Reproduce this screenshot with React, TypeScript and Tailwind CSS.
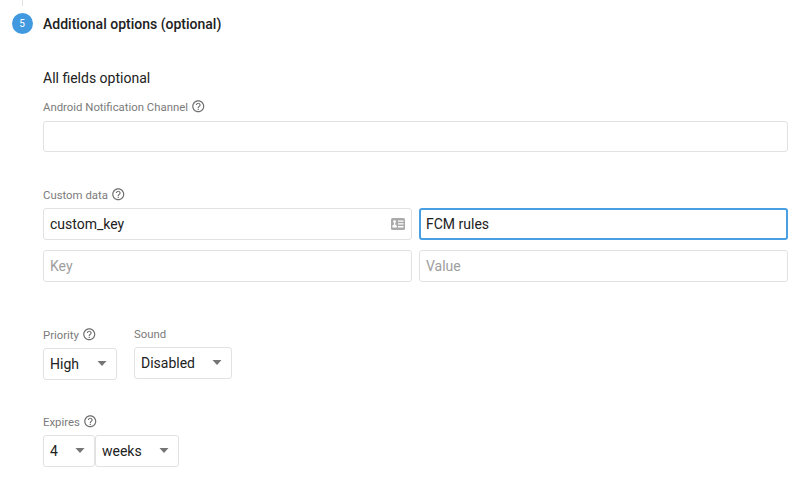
import React from "react";

function HelpIcon() {
  return (
    <svg viewBox="0 0 24 24" className="h-[14.5px] w-[14.5px] shrink-0 fill-[#6f6f6f]">
      <path d="M11 18h2v-2h-2v2zm1-16C6.48 2 2 6.48 2 12s4.48 10 10 10 10-4.48 10-10S17.52 2 12 2zm0 18c-4.41 0-8-3.59-8-8s3.59-8 8-8 8 3.59 8 8-3.59 8-8 8zm0-14c-2.21 0-4 1.79-4 4h2c0-1.1.9-2 2-2s2 .9 2 2c0 2-3 1.75-3 5h2c0-2.25 3-2.5 3-5 0-2.21-1.79-4-4-4z" />
    </svg>
  );
}

function ContactCardIcon() {
  return (
    <svg viewBox="0 0 14 12" className="h-[12px] w-[14px] shrink-0">
      <rect width="14" height="12" rx="1.5" fill="#aaaaaa" />
      <circle cx="3.6" cy="3.6" r="1.4" fill="#fff" />
      <path d="M2.9 4.5h1.4v2.2l1.5.8v2H1.4v-2l1.5-.8z" fill="#fff" />
      <path d="M7 2.5h5.5v1.3H7zM7 5.3h5.5v1.3H7zM7 8.1h5.5v1.3H7z" fill="#fff" />
    </svg>
  );
}

function Label({ text, help = true }: { text: string; help?: boolean }) {
  return (
    <div className="flex h-4 items-center gap-[3.5px] text-[11.375px] leading-4 text-[#7b7b7b]">
      <span className={help ? "pt-px" : "-mt-px"}>{text}</span>
      {help && <HelpIcon />}
    </div>
  );
}

function Select({ value, className }: { value: string; className: string }) {
  return (
    <button
      type="button"
      className={`flex items-center justify-between rounded-[3px] border border-[#e2e2e2] pl-[6px] pr-[9px] text-left ${className}`}
    >
      <span>{value}</span>
      <svg viewBox="0 0 10 5" className="mb-px h-[5px] w-[10px] fill-[#757575]">
        <path d="M0.5 0h9L5 5z" />
      </svg>
    </button>
  );
}

const inputClass =
  "w-full min-w-0 rounded-[3px] border border-[#e2e2e2] px-[6px] placeholder-[#9e9e9e] outline-none";

export default function App() {
  return (
    <div className="h-[486px] w-[800px] overflow-hidden bg-white pl-[11px] pr-3 font-['Roboto',sans-serif] text-[14px] leading-5 text-[#212121]">
      {/* Step header */}
      <div className="ml-[11px] h-[6px] w-px bg-[#e0e0e0]" />
      <div className="mt-[7px] flex h-[21px] items-center gap-[10.5px] pl-[0.5px]">
        <div className="flex h-[21px] w-[21px] items-center justify-center rounded-full bg-[#4199e0] text-[10px] leading-none text-white">
          5
        </div>
        <h2 className="font-medium">Additional options (optional)</h2>
      </div>

      <div className="pl-8">
        <p className="mt-[34px]">All fields optional</p>

        <div className="mt-[10px]">
          <Label text="Android Notification Channel" />
          <input className={`mt-[7px] block h-[31px] ${inputClass}`} />
        </div>

        {/* Key / value pairs */}
        <div className="mt-[34px]">
          <Label text="Custom data" />
          <div className="mt-[6px] grid grid-cols-2 gap-x-[7px] gap-y-[10px]">
            <div className="flex h-8 items-center rounded-[3px] border border-[#e2e2e2] px-[6px]">
              <input defaultValue="custom_key" className="min-w-0 flex-1 outline-none" />
              <ContactCardIcon />
            </div>
            <input
              defaultValue="FCM rules"
              className="h-8 w-full min-w-0 rounded-[3px] border-2 border-[#4a9fe2] px-[5px] outline-none"
            />
            <input placeholder="Key" className={`h-8 ${inputClass}`} />
            <input placeholder="Value" className={`h-8 ${inputClass}`} />
          </div>
        </div>

        <div className="mt-[44px] flex items-start gap-[17px]">
          <div>
            <Label text="Priority" />
            <Select value="High" className="mt-[6px] h-8 w-[74px]" />
          </div>
          <div>
            <Label text="Sound" help={false} />
            <Select value="Disabled" className="mt-[5px] h-8 w-[98px]" />
          </div>
        </div>

        <div className="mt-[33px]">
          <Label text="Expires" />
          <div className="mt-[6px] flex">
            <Select value="4" className="h-8 w-[52px]" />
            <Select value="weeks" className="h-8 w-[84px]" />
          </div>
        </div>
      </div>
    </div>
  );
}
